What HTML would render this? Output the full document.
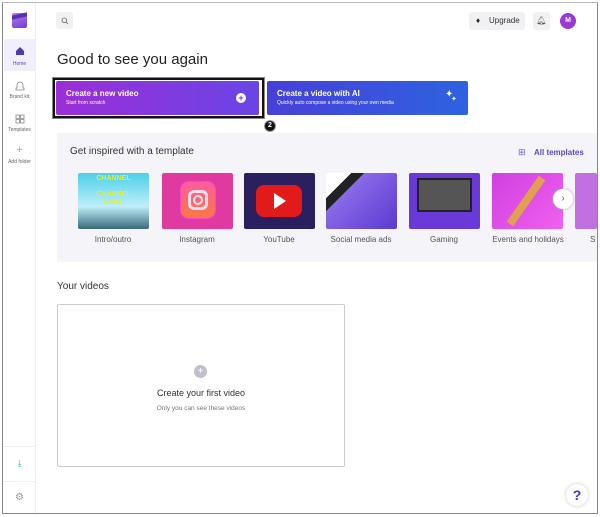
<!DOCTYPE html>
<html><head><style>
*{box-sizing:border-box;margin:0;padding:0}
body{width:600px;height:517px;background:#fff;font-family:"Liberation Sans",sans-serif;position:relative;overflow:hidden;color:#222}
.frame{position:absolute;left:2px;top:2px;width:596px;height:512px;border:1px solid #888;border-top-color:#bbb}
.side{position:absolute;left:3px;top:3px;width:33px;height:510px;border-right:1px solid #eee;background:#fff}
.a{position:absolute}
.si{position:absolute;left:0;width:33px;text-align:center;font-size:5px;color:#666}
.thumb{position:absolute;top:173px;width:71px;height:56px;border-radius:2px}
.lbl{position:absolute;top:235px;width:82px;text-align:center;font-size:8px;color:#555}
</style></head><body>
<div class="frame"></div>
<div class="side">
  <div class="a" style="left:9px;top:10px;width:15px;height:15px;border-radius:2px;background:linear-gradient(160deg,#c07be8,#6b3fd8)"></div>
  <div class="a" style="left:9px;top:11px;width:15px;height:4px;background:#5a2fb0;transform:skewY(-12deg)"></div>
  <div class="a" style="left:1px;top:36px;width:31px;height:32px;background:#f1effb"></div>
  <svg class="a" style="left:12px;top:43px" width="10" height="10" viewBox="0 0 10 10"><path d="M1 5 L5 1 L9 5 V9 H1Z" fill="#4b3bb0"/></svg>
  <div class="si" style="top:58px;color:#5a48c0">Home</div>
  <svg class="a" style="left:12px;top:78px" width="10" height="11" viewBox="0 0 10 11"><path d="M5 1a3 3 0 0 1 3 3v3h1v2H1V7h1V4a3 3 0 0 1 3-3z" fill="none" stroke="#888" stroke-width=".8"/></svg>
  <div class="si" style="top:91px">Brand kit</div>
  <svg class="a" style="left:12px;top:111px" width="10" height="10" viewBox="0 0 10 10"><path d="M1 1h3.5v3.5H1zM5.5 1H9v3.5H5.5zM1 5.5h3.5V9H1zM5.5 5.5H9V9H5.5z" fill="none" stroke="#888" stroke-width=".8"/></svg>
  <div class="si" style="top:124px">Templates</div>
  <div class="si" style="top:141px;font-size:11px;color:#aaa">+</div>
  <div class="si" style="top:156px">Add folder</div>
  <div class="a" style="left:0;top:443px;width:33px;border-top:1px solid #eee"></div>
  <div class="si" style="top:455px;font-size:9px;color:#3cb89a">⤓</div>
  <div class="a" style="left:0;top:478px;width:33px;border-top:1px solid #eee"></div>
  <div class="si" style="top:489px;font-size:10px;color:#999">⚙</div>
</div>
<!-- top bar -->
<div class="a" style="left:56px;top:12px;width:17px;height:17px;background:#f1f1f3;border-radius:3px"></div>
<svg class="a" style="left:61px;top:17px" width="8" height="8" viewBox="0 0 8 8"><circle cx="3.3" cy="3.3" r="2.3" fill="none" stroke="#666" stroke-width=".8"/><path d="M5 5l2 2" stroke="#666" stroke-width=".8"/></svg>
<div class="a" style="left:469px;top:12px;width:56px;height:18px;background:#f1f1f3;border-radius:3px;font-size:8px;line-height:18px;padding-left:20px;color:#333">Upgrade</div>
<div class="a" style="left:476px;top:16px;font-size:8px">♦</div>
<div class="a" style="left:533px;top:12px;width:17px;height:18px;background:#f1f1f3;border-radius:3px;text-align:center;font-size:8px;line-height:18px;color:#555">🔔︎</div>
<div class="a" style="left:560px;top:13px;width:16px;height:16px;border-radius:50%;background:#9a3ad0;color:#fff;font-size:7px;font-weight:bold;text-align:center;line-height:16px">M</div>
<div class="a" style="left:57px;top:51px;font-size:15px;color:#222">Good to see you again</div>
<!-- buttons -->
<div class="a" style="left:53px;top:78px;width:211px;height:40px;border:2px solid #111;outline:1px solid #888"></div>
<div class="a" style="left:56px;top:81px;width:203px;height:34px;border-radius:2px;background:linear-gradient(90deg,#9b2ed6,#6a45e6);color:#fff">
  <div class="a" style="left:10px;top:8px;font-size:8px;font-weight:bold">Create a new video</div>
  <div class="a" style="left:10px;top:19px;font-size:5px">Start from scratch</div>
  <div class="a" style="left:180px;top:12px;width:10px;height:10px;border-radius:50%;background:#fff;color:#7a3ae0;font-size:9px;font-weight:bold;text-align:center;line-height:10px">+</div>
</div>
<div class="a" style="left:264px;top:120px;width:12px;height:12px;border-radius:50%;background:#111;border:1px solid #999;color:#fff;font-size:7px;font-weight:bold;text-align:center;line-height:10px">2</div>
<div class="a" style="left:267px;top:81px;width:201px;height:34px;border-radius:2px;background:linear-gradient(90deg,#4740d8,#2e62e0);color:#fff">
  <div class="a" style="left:10px;top:8px;font-size:8px;font-weight:bold">Create a video with AI</div>
  <div class="a" style="left:10px;top:19px;font-size:5px">Quickly auto compose a video using your own media</div>
  <div class="a" style="left:178px;top:8px;font-size:10px">✦</div><div class="a" style="left:184px;top:14px;font-size:7px">✦</div>
</div>
<!-- templates panel -->
<div class="a" style="left:57px;top:133px;width:540px;height:129px;background:#f5f4f9"></div>
<div class="a" style="left:70px;top:146px;font-size:10px;color:#333">Get inspired with a template</div>
<div class="a" style="left:518px;top:147px;font-size:9px;color:#6a5ad0">⊞</div>
<div class="a" style="left:534px;top:148px;font-size:8px;color:#5a4ac8;font-weight:bold">All templates</div>
<div class="thumb" style="left:78px;background:linear-gradient(180deg,#4cd0e8,#bfeefa 60%,#3a6a7a)"><div style="color:#e8ef2a;font-size:7px;font-weight:bold;text-align:center;margin-top:2px;line-height:8px">CHANNEL<br><br>CHANNEL<br>NAME</div></div>
<div class="thumb" style="left:162px;background:#e03aa0"><div class="a" style="left:18px;top:8px;width:36px;height:38px;border-radius:9px;background:linear-gradient(180deg,#ff5aa0,#f77a40);border:1px solid #f4c"></div><div class="a" style="left:26px;top:17px;width:20px;height:20px;border-radius:6px;border:3px solid #fde"></div><div class="a" style="left:31px;top:22px;width:10px;height:10px;border-radius:50%;border:2px solid #fde"></div></div>
<div class="thumb" style="left:244px;background:#2a2060"><div class="a" style="left:12px;top:12px;width:46px;height:32px;border-radius:8px;background:#e21a1a"></div><svg class="a" style="left:30px;top:20px" width="12" height="16"><path d="M0 0L12 8L0 16Z" fill="#fff"/></svg></div>
<div class="thumb" style="left:326px;background:linear-gradient(135deg,#fff 0 20%,#222 20% 30%,#8a6ae8 30%,#5a3ad0)"></div>
<div class="thumb" style="left:409px;background:#6a3ad8"><div class="a" style="left:8px;top:5px;width:55px;height:34px;background:#555;border:2px solid #222"></div></div>
<div class="thumb" style="left:492px;background:linear-gradient(135deg,#d040e0,#f060f0);"><div class="a" style="left:30px;top:0;width:8px;height:56px;background:#e0a050;transform:rotate(35deg)"></div></div>
<div class="thumb" style="left:575px;width:22px;background:#c070e0"></div>
<div class="a" style="left:553px;top:189px;width:20px;height:20px;border-radius:50%;background:#fff;box-shadow:0 0 3px #aaa;text-align:center;line-height:19px;font-size:10px;color:#666">›</div>
<div class="lbl" style="left:72px">Intro/outro</div>
<div class="lbl" style="left:156px">Instagram</div>
<div class="lbl" style="left:238px">YouTube</div>
<div class="lbl" style="left:320px">Social media ads</div>
<div class="lbl" style="left:403px">Gaming</div>
<div class="lbl" style="left:487px">Events and holidays</div>
<div class="a" style="left:590px;top:235px;font-size:8px;color:#555">S</div>
<!-- your videos -->
<div class="a" style="left:57px;top:281px;font-size:10px;color:#333">Your videos</div>
<div class="a" style="left:57px;top:304px;width:288px;height:163px;border:1px solid #ccc;border-radius:2px"></div>
<div class="a" style="left:194px;top:365px;width:13px;height:13px;border-radius:50%;background:#c0bfd0;color:#fff;font-size:10px;text-align:center;line-height:13px">+</div>
<div class="a" style="left:57px;top:388px;width:288px;text-align:center;font-size:9px;color:#333">Create your first video</div>
<div class="a" style="left:57px;top:405px;width:288px;text-align:center;font-size:6.5px;color:#777">Only you can see these videos</div>
<div class="a" style="left:566px;top:484px;width:22px;height:22px;border-radius:50%;background:#fff;box-shadow:0 0 4px #ccc;text-align:center;font-size:14px;font-weight:bold;line-height:22px;color:#4a2ad0">?</div>
</body></html>
